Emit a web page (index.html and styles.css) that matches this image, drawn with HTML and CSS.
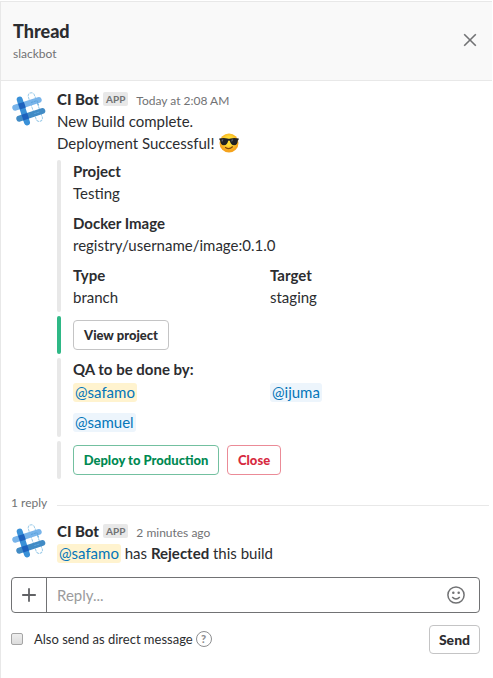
FILE: index.html
```html
<!DOCTYPE html>
<html lang="en">
<head>
<meta charset="utf-8">
<title>Thread</title>
<link rel="stylesheet" href="styles.css">
</head>
<body>
<svg width="0" height="0" class="defs" aria-hidden="true">
  <symbol id="bot" viewBox="0 0 36 36">
    <g fill="none" stroke-linecap="round">
      <rect x="21.1" y="1.1" width="6.4" height="30" rx="3.2" transform="rotate(-19.5 24.3 16.1)" stroke="#9bcbe8" stroke-width="1" stroke-dasharray="2 1.5"/>
      <path d="M4.3 16.7 27.7 9" stroke="#78b4ea" stroke-width="6"/>
      <path d="M8.3 27.7 31.3 20" stroke="#418bc5" stroke-width="6"/>
      <path d="M8.7 8.7 16 31.3" stroke="#3a91d8" stroke-width="6"/>
      <path d="m7.2 12.8 5.7-1.9 1.9 5.7-5.7 1.9zM10.5 23.8l5.7-1.9 1.9 5.7-5.7 1.9z" fill="#1d61bd"/>
      <path d="m20.4 11.4 5.5-1.8 1.8 5.3M23.7 22.5l5.5-1.8" stroke="#5ba4dc" stroke-width="1" stroke-dasharray="1.5 1.5"/>
    </g>
  </symbol>
</svg>
<aside class="thread">
  <header class="head">
    <div><h1>Thread</h1><p>slackbot</p></div>
    <svg class="close" viewBox="0 0 14 14"><path d="m1.2 1.2 11.6 11.6M12.8 1.2 1.2 12.8"/></svg>
  </header>

  <article class="message">
    <svg class="avatar"><use href="#bot"/></svg>
    <div class="body">
      <div class="meta"><b>CI Bot</b><span class="app">APP</span><time>Today at 2:08 AM</time></div>
      <p>New Build complete.</p>
      <p class="line">Deployment Successful! <svg class="emoji" viewBox="0 0 20 20">
        <defs><radialGradient id="face" cy=".4"><stop offset=".45" stop-color="#ffdc36"/><stop offset="1" stop-color="#f5a31d"/></radialGradient></defs>
        <circle cx="10" cy="10" r="9.5" fill="url(#face)"/>
        <path d="M.2 5.4Q5 4.4 8.4 5.4q1.6.5 3.2 0Q15 4.4 19.8 5.4l-.3 1.7-.7.5c-.2 3.2-1.3 4.7-3.7 4.7-2.5 0-3.6-1.5-4.2-4.2-.2-.7-1.6-.7-1.8 0-.6 2.7-1.7 4.2-4.2 4.2-2.4 0-3.5-1.5-3.7-4.7L.5 7.1z" fill="#202124"/>
        <path d="m2.5 6.7 2-.4-1.5 3zM12.3 6.7l2-.4-1.5 3z" fill="#686b70"/>
        <path d="M6.5 14.5q3.7 2.5 7-.7" fill="none" stroke="#81470a" stroke-width="1.2" stroke-linecap="round"/>
      </svg></p>

      <section class="attachment fields">
        <dl class="wide"><dt>Project</dt><dd>Testing</dd></dl>
        <dl class="wide"><dt>Docker Image</dt><dd>registry/username/image:0.1.0</dd></dl>
        <dl><dt>Type</dt><dd>branch</dd></dl>
        <dl><dt>Target</dt><dd>staging</dd></dl>
      </section>
      <section class="attachment actions green"><button>View project</button></section>
      <section class="attachment review">
        <b>QA to be done by:</b>
        <div class="people">
          <div><span class="mention me">@safamo</span></div>
          <div><span class="mention">@ijuma</span></div>
          <div><span class="mention">@samuel</span></div>
        </div>
      </section>
      <section class="attachment actions">
        <button class="primary">Deploy to Production</button><button class="danger">Close</button>
      </section>
    </div>
  </article>

  <div class="divider"><span>1 reply</span></div>

  <article class="message">
    <svg class="avatar"><use href="#bot"/></svg>
    <div class="body">
      <div class="meta"><b>CI Bot</b><span class="app">APP</span><time>2 minutes ago</time></div>
      <p><span class="mention me">@safamo</span> has <b>Rejected</b> this build</p>
    </div>
  </article>

  <div class="composer">
    <div class="plus"><svg viewBox="0 0 14 14"><path d="M7 .2v13.6M.2 7h13.6"/></svg></div>
    <span class="placeholder">Reply...</span>
    <svg class="smile" viewBox="0 0 18 18"><circle cx="9" cy="9" r="8.1"/><path d="M5.2 11.1q3.8 4 7.6 0"/><circle class="eye" cx="6.3" cy="6.7" r="1.25"/><circle class="eye" cx="11.7" cy="6.7" r="1.25"/></svg>
  </div>
  <footer class="foot">
    <span class="check"></span>
    <span class="also">Also send as direct message</span>
    <span class="help">?</span>
    <button class="send">Send</button>
  </footer>
</aside>
</body>
</html>
```

FILE: styles.css
```css
* { box-sizing: border-box; }
body {
  margin: 0;
  padding-top: 1px;
  background: #fff;
  color: #2c2d30;
  font: 15px/22px Lato, sans-serif;
}
h1, p, dl, dd { margin: 0; }
b, dt { font-weight: 700; }
.defs { position: absolute; }
.thread {
  width: 492px;
  height: 677px;
  border-left: 1px solid #e8e8e8;
  border-top: 1px solid #e8e8e8;
}
.head {
  display: flex;
  justify-content: space-between;
  height: 79px;
  padding: 17px 15px 0 12px;
  background: #f9f9f9;
  border-bottom: 1px solid #e8e8e8;
}
.head h1 { font-size: 18px; line-height: 24px; font-weight: 900; }
.head p { font-size: 12px; line-height: 21px; color: #717274; }
.close { width: 14px; height: 14px; margin-top: 14px; stroke: #717274; stroke-width: 1.6; fill: none; }

.message { display: flex; padding-left: 10px; }
.head + .message { padding-top: 7px; }
.avatar { width: 36px; height: 36px; margin: 3px 10px 0 0; flex: none; }
.body { flex: 1; }
.meta { display: flex; align-items: center; height: 22px; }
.meta b { font-weight: 900; }
.app {
  margin: 0 8px 0 4px;
  padding: 0 3px;
  height: 14px;
  border-radius: 2px;
  background: #e8e8e8;
  color: #717274;
  font-size: 10px;
  line-height: 14px;
  font-weight: 700;
}
.meta time { color: #717274; font-size: 12px; padding-top: 3px; }
.line { height: 22px; }
.emoji { width: 20px; height: 20px; margin-left: 1px; vertical-align: -4px; }

.attachment { position: relative; padding-left: 16px; margin-bottom: 4px; }
.attachment::before {
  content: "";
  position: absolute;
  inset: 0 auto 0 0;
  width: 4px;
  border-radius: 2px;
  background: #e8e8e8;
}
.attachment.green::before { background: #2eb886; }
.fields {
  display: grid;
  grid-template-columns: 197px 1fr;
  align-content: start;
  row-gap: 8px;
  height: 152px;
  margin-top: 6px;
}
.wide { grid-column: 1 / -1; }
.actions { display: flex; gap: 8px; height: 38px; padding-top: 4px; }
button {
  height: 30px;
  padding: 0 10px;
  border: 1px solid #c4c4c5;
  border-radius: 4px;
  background: #fff;
  color: #2c2d30;
  font: 900 13px/28px Lato, sans-serif;
}
.primary { width: 146px; padding: 0; color: #008952; border-color: #73c0a0; }
.danger { color: #d72b3f; border-color: #eb8b97; }
.review { height: 79px; }
.people { display: grid; grid-template-columns: 197px 1fr; row-gap: 8px; margin-top: 1px; }
.mention { padding: 0 2px 1px; border-radius: 3px; background: #edf5fc; color: #0576b9; }
.mention.me { background: #fff3cf; }

.divider {
  display: flex;
  align-items: center;
  gap: 10px;
  height: 20px;
  margin: 10px 3px 0 10px;
  color: #717274;
  font-size: 12px;
}
.divider::after { content: ""; flex: 1; height: 1px; margin-top: 4px; background: #e8e8e8; }
.divider + .message { padding-top: 7px; }

.composer {
  display: flex;
  align-items: center;
  width: 469px;
  height: 36px;
  margin: 13px 0 0 10px;
  border: 1px solid #717274;
  border-radius: 4px;
}
.plus {
  display: flex;
  align-items: center;
  justify-content: center;
  width: 35px;
  height: 34px;
  border-right: 1px solid #717274;
}
.plus svg { width: 14px; height: 14px; stroke: #616265; stroke-width: 1.8; }
.placeholder { flex: 1; padding-left: 10px; color: #9b9b9d; }
.smile { width: 18px; height: 18px; margin-right: 14px; fill: none; stroke: #717274; stroke-width: 1.5; }
.smile .eye { fill: #717274; stroke: none; }
.foot { display: flex; align-items: center; height: 29px; margin: 12px 12px 0 10px; font-size: 13px; }
.check {
  width: 12px;
  height: 12px;
  margin: 0 11px 2px 0;
  border: 1px solid #a5a5a5;
  border-radius: 2px;
  background: linear-gradient(#eee, #dcdcdc);
}
.also { margin-top: -1px; }
.help {
  width: 16px;
  height: 16px;
  margin: -1px 0 0 3px;
  border: 1.5px solid #8d8e90;
  border-radius: 50%;
  color: #8d8e90;
  text-align: center;
  font-size: 11px;
  line-height: 14px;
  font-weight: 900;
}
.send { margin-left: auto; width: 51px; height: 29px; padding: 0; font-size: 14px; line-height: 27px; }
```
